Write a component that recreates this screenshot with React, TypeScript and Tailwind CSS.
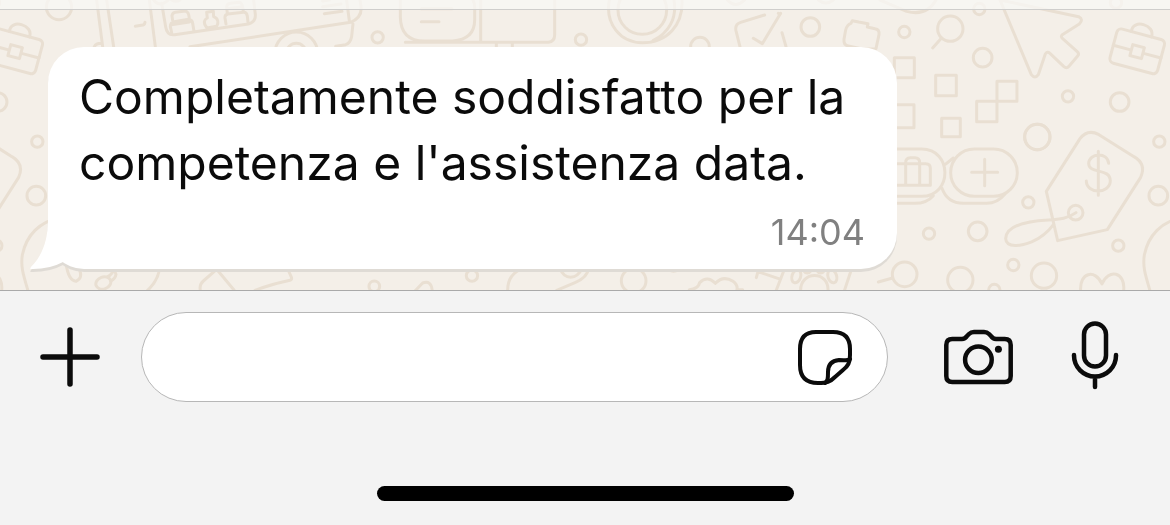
import type { ReactNode } from "react";

const message = {
  text: "Completamente soddisfatto per la competenza e l'assistenza data.",
  time: "14:04",
};

// Distance after which the wallpaper drawing repeats itself.
const TILE_WIDTH = 1122;

export default function App() {
  return (
    <div className="min-h-[525px] flex flex-col bg-[#f3f3f3] font-['Inter',sans-serif] text-[#0b0b0b]">
      <main className="relative overflow-hidden bg-[#f4efe8] border-b border-[#a9a9a9]">
        <Wallpaper />
        <header className="relative h-[10px] bg-[#f8f8f5]/75 border-b border-[#cfcecc]" />
        <div className="relative pl-12 pr-12 pt-[37px] pb-[21px]">
          <MessageBubble text={message.text} time={message.time} />
        </div>
      </main>
      <Composer />
    </div>
  );
}

function MessageBubble({ text, time }: { text: string; time: string }) {
  return (
    <article className="relative max-w-[849px] rounded-[36px] bg-white pl-[31px] pr-8 pt-[17px] pb-[17px] drop-shadow-[0_3px_0_#dfdbd5]">
      <svg className="absolute -left-[18px] bottom-0" width="60" height="50" fill="#fff" aria-hidden="true">
        <path d="M18 0C18 22 12 37 1 48Q-1 51 3 50Q20 50 33 43L60 30V0Z" />
      </svg>
      <p className="relative text-[48px] leading-[66px]">{text}</p>
      <time className="relative block mt-4 text-right text-[36px] leading-10 text-[#808080]">{time}</time>
    </article>
  );
}

function Composer() {
  return (
    <footer className="pt-[21px] pb-6">
      <form className="flex items-center pl-10 pr-[50px]" onSubmit={(e) => e.preventDefault()}>
        <IconButton label="Allega">
          <svg width="60" height="60" {...iconStroke} strokeWidth={5.5}>
            <path d="M30 3V57M3 30H57" />
          </svg>
        </IconButton>
        <div className="ml-[41px] flex h-[90px] min-w-0 flex-1 items-center rounded-full border border-[#b7b7b7] bg-white pl-10 pr-[34px]">
          <input type="text" aria-label="Messaggio" className="min-w-0 flex-1 text-[48px] outline-none" />
          <IconButton label="Sticker">
            <svg width="56" height="56" {...iconStroke} strokeWidth={4}>
              <path d="M19 3H36Q53 3 53 20V26C53 34 51 37 46 41L38 48C33 53 30 54 21 54C8 54 3 47 3 36V20Q3 3 19 3Z" />
              <path d="M53 30C51 32 48 31 42 31Q31 32 31 43C31 49 31 52 28 54" />
            </svg>
          </IconButton>
        </div>
        <div className="ml-14 flex items-center gap-14">
          <IconButton label="Fotocamera">
            <svg width="70" height="60" {...iconStroke} strokeWidth={4.5}>
              <path d="M8.3 12H18Q21 12 23 9L25 7Q27 5 30 5H40Q43 5 45 7L47 9Q49 12 52 12H60.7Q66.7 12 66.7 18V49Q66.7 55 60.7 55H8.3Q2.3 55 2.3 49V18Q2.3 12 8.3 12Z" />
              <circle cx="34.4" cy="32.7" r="13.3" />
              <circle cx="54.4" cy="22.3" r="3.5" fill="currentColor" stroke="none" />
            </svg>
          </IconButton>
          <IconButton label="Messaggio vocale">
            <svg width="50" height="72" {...iconStroke} strokeWidth={4.5}>
              <rect x="14" y="2.5" width="22" height="43" rx="11" />
              <path d="M4 34V34.5A21 21 0 0 0 46 34.5V34M25 56V66" />
            </svg>
          </IconButton>
        </div>
      </form>
      <div className="mx-auto mt-[84px] h-[15px] w-[417px] rounded-full bg-black" />
    </footer>
  );
}

const iconStroke = {
  fill: "none",
  stroke: "currentColor",
  strokeWidth: 5,
  strokeLinecap: "round",
  strokeLinejoin: "round",
  "aria-hidden": true,
} as const;

function IconButton({ label, children }: { label: string; children: ReactNode }) {
  return (
    <button type="button" aria-label={label} className="shrink-0">
      {children}
    </button>
  );
}

function Wallpaper() {
  return (
    <svg
      className="absolute inset-0 h-full w-full"
      fill="none"
      stroke="#e9dfd2"
      strokeWidth="9"
      strokeLinecap="round"
      strokeLinejoin="round"
      aria-hidden="true"
    >
      <VanDoodles />
      <DeskDoodles />
      <FloorDoodles />
      <ShopDoodles />
      <g transform={`translate(${-TILE_WIDTH} 0)`}>
        <ShopDoodles />
      </g>
    </svg>
  );
}

// The doodles are drawn on a grid three times finer than the page.
function VanDoodles() {
  return (
    <g transform="scale(.3333)">
      <circle cx="177" cy="21" r="38" />
      <path d="M290 0L308 140M320 0L341 140M283 140Q288 130 303 130M448 0L466 140M406 79L424 76Q434 76 435 67" />
      <path d="M485 10L497 80Q501 107 524 104L745 72Q768 66 766 43L761 0M461 0Q480 24 505 0M515 0Q528 8 540 0" />
      <path d="M515 98L511 80Q511 67 523 65L566 58Q577 60 578 70L582 94M518 62L516 47Q518 38 526 37L556 33Q567 35 568 57M514 74L568 66" />
      <path d="M621 84C608 68 613 58 622 54L620 37L640 34L641 50C655 55 657 70 650 79Z" />
      <path d="M678 72L675 54Q674 44 684 42L730 37Q740 36 742 48L744 66M682 40L680 20Q681 12 691 10L718 7Q728 8 730 35M680 26L728 20" />
      <path d="M570 140L1052 67Q1088 52 1083 18L1080 0M1040 0L1048 62M1059 72L1055 110Q1051 130 1037 134L1007 139" />
      <path d="M968 3L988 0M968 20L1023 12M973 41L1026 34" />
      <circle cx="889" cy="160" r="64" />
      <circle cx="889" cy="160" r="30" />
      <circle cx="1133" cy="112" r="17" />
    </g>
  );
}

function DeskDoodles() {
  return (
    <g transform="translate(390 0) scale(.3333)">
      <path d="M31 0V50Q32 123 103 123H188Q254 118 254 60V20Q254 10 249 0M94 26H186M94 65H147" />
      <path d="M272 0V124M46 127H475Q494 125 494 105V0M319 130V150M367 130V150" />
      <circle cx="573" cy="119" r="17" />
      <circle cx="757" cy="30" r="73" />
      <path d="M658 0C645 70 690 128 757 128C832 128 880 75 876 0M852 0C862 55 835 100 790 121" />
      <path d="M1012 0Q1037 27 1064 0M1050 140L1038 92Q1034 73 1052 67L1124 45M1090 115L1117 131L1172 40" />
      <circle cx="930" cy="140" r="28" />
    </g>
  );
}

function FloorDoodles() {
  return (
    <g>
      <g transform="translate(0 50) scale(.3333)">
        <path d="M198 640Q205 692 228 694Q250 684 238 658M345 650Q338 674 322 681" />
        <ellipse cx="310" cy="699" rx="23" ry="18" transform="rotate(-20 310 699)" />
      </g>
      <g transform="translate(100 255) scale(.3333)">
        <path d="M25 40Q48 50 48 58Q46 72 32 78" />
        <path d="M302 110Q296 90 310 78L350 43L402 105M560 35L574 66Q577 74 570 76Q520 86 465 106" />
        <circle cx="823" cy="94" r="16" />
        <circle cx="903" cy="28" r="16" />
        <circle cx="1116" cy="62" r="17" />
        <path d="M945 108L968 84Q994 74 997 108" />
      </g>
      <g transform="translate(500 255) scale(.3333)">
        <path d="M23 108Q22 56 70 40M180 40Q190 67 212 67Q234 66 246 40M266 40Q262 68 225 83L170 106" />
        <circle cx="401" cy="77" r="37" />
        <circle cx="521" cy="32" r="17" />
        <path d="M568 104Q595 102 599 83Q622 60 646 85Q670 60 699 79Q714 90 711 104H728" />
        <path d="M769 68L774 50L836 71M855 38L828 108M1056 38L1033 108M902 108C900 46 988 46 984 108" />
        <ellipse cx="889" cy="64" rx="13" ry="20" transform="rotate(18 889 64)" />
        <ellipse cx="997" cy="64" rx="13" ry="20" transform="rotate(-18 997 64)" />
        <ellipse cx="922" cy="34" rx="14" ry="20" />
        <ellipse cx="962" cy="34" rx="14" ry="20" />
      </g>
    </g>
  );
}

function ShopDoodles() {
  return (
    <g>
      <g transform="translate(780 0) scale(.3333)">
        <path d="M300 0L380 34Q440 50 468 0M115 0Q138 18 160 0M-5 40L0 42M6 98L18 140" />
        <circle cx="91" cy="81" r="28" />
        <circle cx="373" cy="96" r="17" />
        <circle cx="598" cy="27" r="17" />
        <circle cx="1008" cy="8" r="17" />
        <circle cx="511" cy="86" r="38" />
        <path d="M484 115L458 144M205 138Q190 135 192 118L197 90Q201 74 213 70L217 62L236 66L264 71L262 81L285 86Q299 88 297 104L288 146Q245 150 205 138Z" />
        <circle cx="608" cy="173" r="28" />
        <rect x="343" y="173" width="60" height="60" />
        <rect x="467" y="226" width="62" height="61" />
        <rect x="651" y="244" width="60" height="60" />
        <rect x="590" y="304" width="61" height="61" />
        <rect x="340" y="314" width="62" height="69" />
        <rect x="485" y="355" width="56" height="55" />
        <path d="M656 -10L754 224Q765 238 775 224L796 162Q802 153 810 160L851 199Q860 207 867 199L893 168Q899 161 891 154L848 116Q841 110 847 104L898 72Q912 58 896 50L660 0" />
        <circle cx="864" cy="289" r="17" />
        <circle cx="1019" cy="306" r="28" />
        <circle cx="772" cy="411" r="38" />
        <g transform="rotate(15 1072 153)">
          <rect x="998" y="101" width="148" height="106" rx="14" />
          <path d="M998 155H1052M1092 155H1146M1040 101C1032 62 1106 62 1102 101" />
          <rect x="1054" y="138" width="36" height="34" />
        </g>
      </g>

      <g transform="translate(880 130) scale(.3333)">
        <path d="M40 57H125C218 57 218 199 125 199H40M40 220H105Q140 220 160 197M196 103L220 84M186 175Q202 220 250 220H320Q352 220 375 192" />
        <rect x="212" y="57" width="200" height="142" rx="71" />
        <path d="M275 127H353M314 88V167M40 101H137Q151 101 151 115V166H40M77 166V98Q77 83 91 83H105Q119 83 119 98V166" />
        <circle cx="472" cy="21" r="38" />
        <circle cx="838" cy="35" r="17" />
        <circle cx="835" cy="197" r="28" />
        <circle cx="445" cy="217" r="17" />
        <circle cx="147" cy="311" r="17" />
        <circle cx="293" cy="304" r="28" />
        <circle cx="715" cy="347" r="17" />
        <circle cx="400" cy="405" r="17" />
        <circle cx="492" cy="437" r="38" />
        <circle cx="74" cy="433" r="37" />
        <circle cx="241" cy="450" r="38" />
        <circle cx="343" cy="480" r="17" />
        <path d="M-5 456L35 445" />
        <path d="M499 184L600 26Q623 -4 657 14L762 80Q800 102 782 142L682 299L533 332Z" />
        <path d="M655 64V196M686 100C683 65 628 68 626 100C626 134 691 112 691 153C689 193 620 193 619 153" />
        <circle cx="587" cy="248" r="22" />
        <path d="M588 248C565 265 540 268 505 270C430 274 378 290 377 326C379 355 424 349 455 336Q495 318 521 283" />
        <path d="M602 482C598 428 645 415 666 462C685 415 737 424 731 482" />
        <path d="M810 482C795 432 788 410 793 375C805 315 845 275 905 263C1020 248 1175 265 1206 370Q1215 440 1168 482" />
      </g>
    </g>
  );
}
